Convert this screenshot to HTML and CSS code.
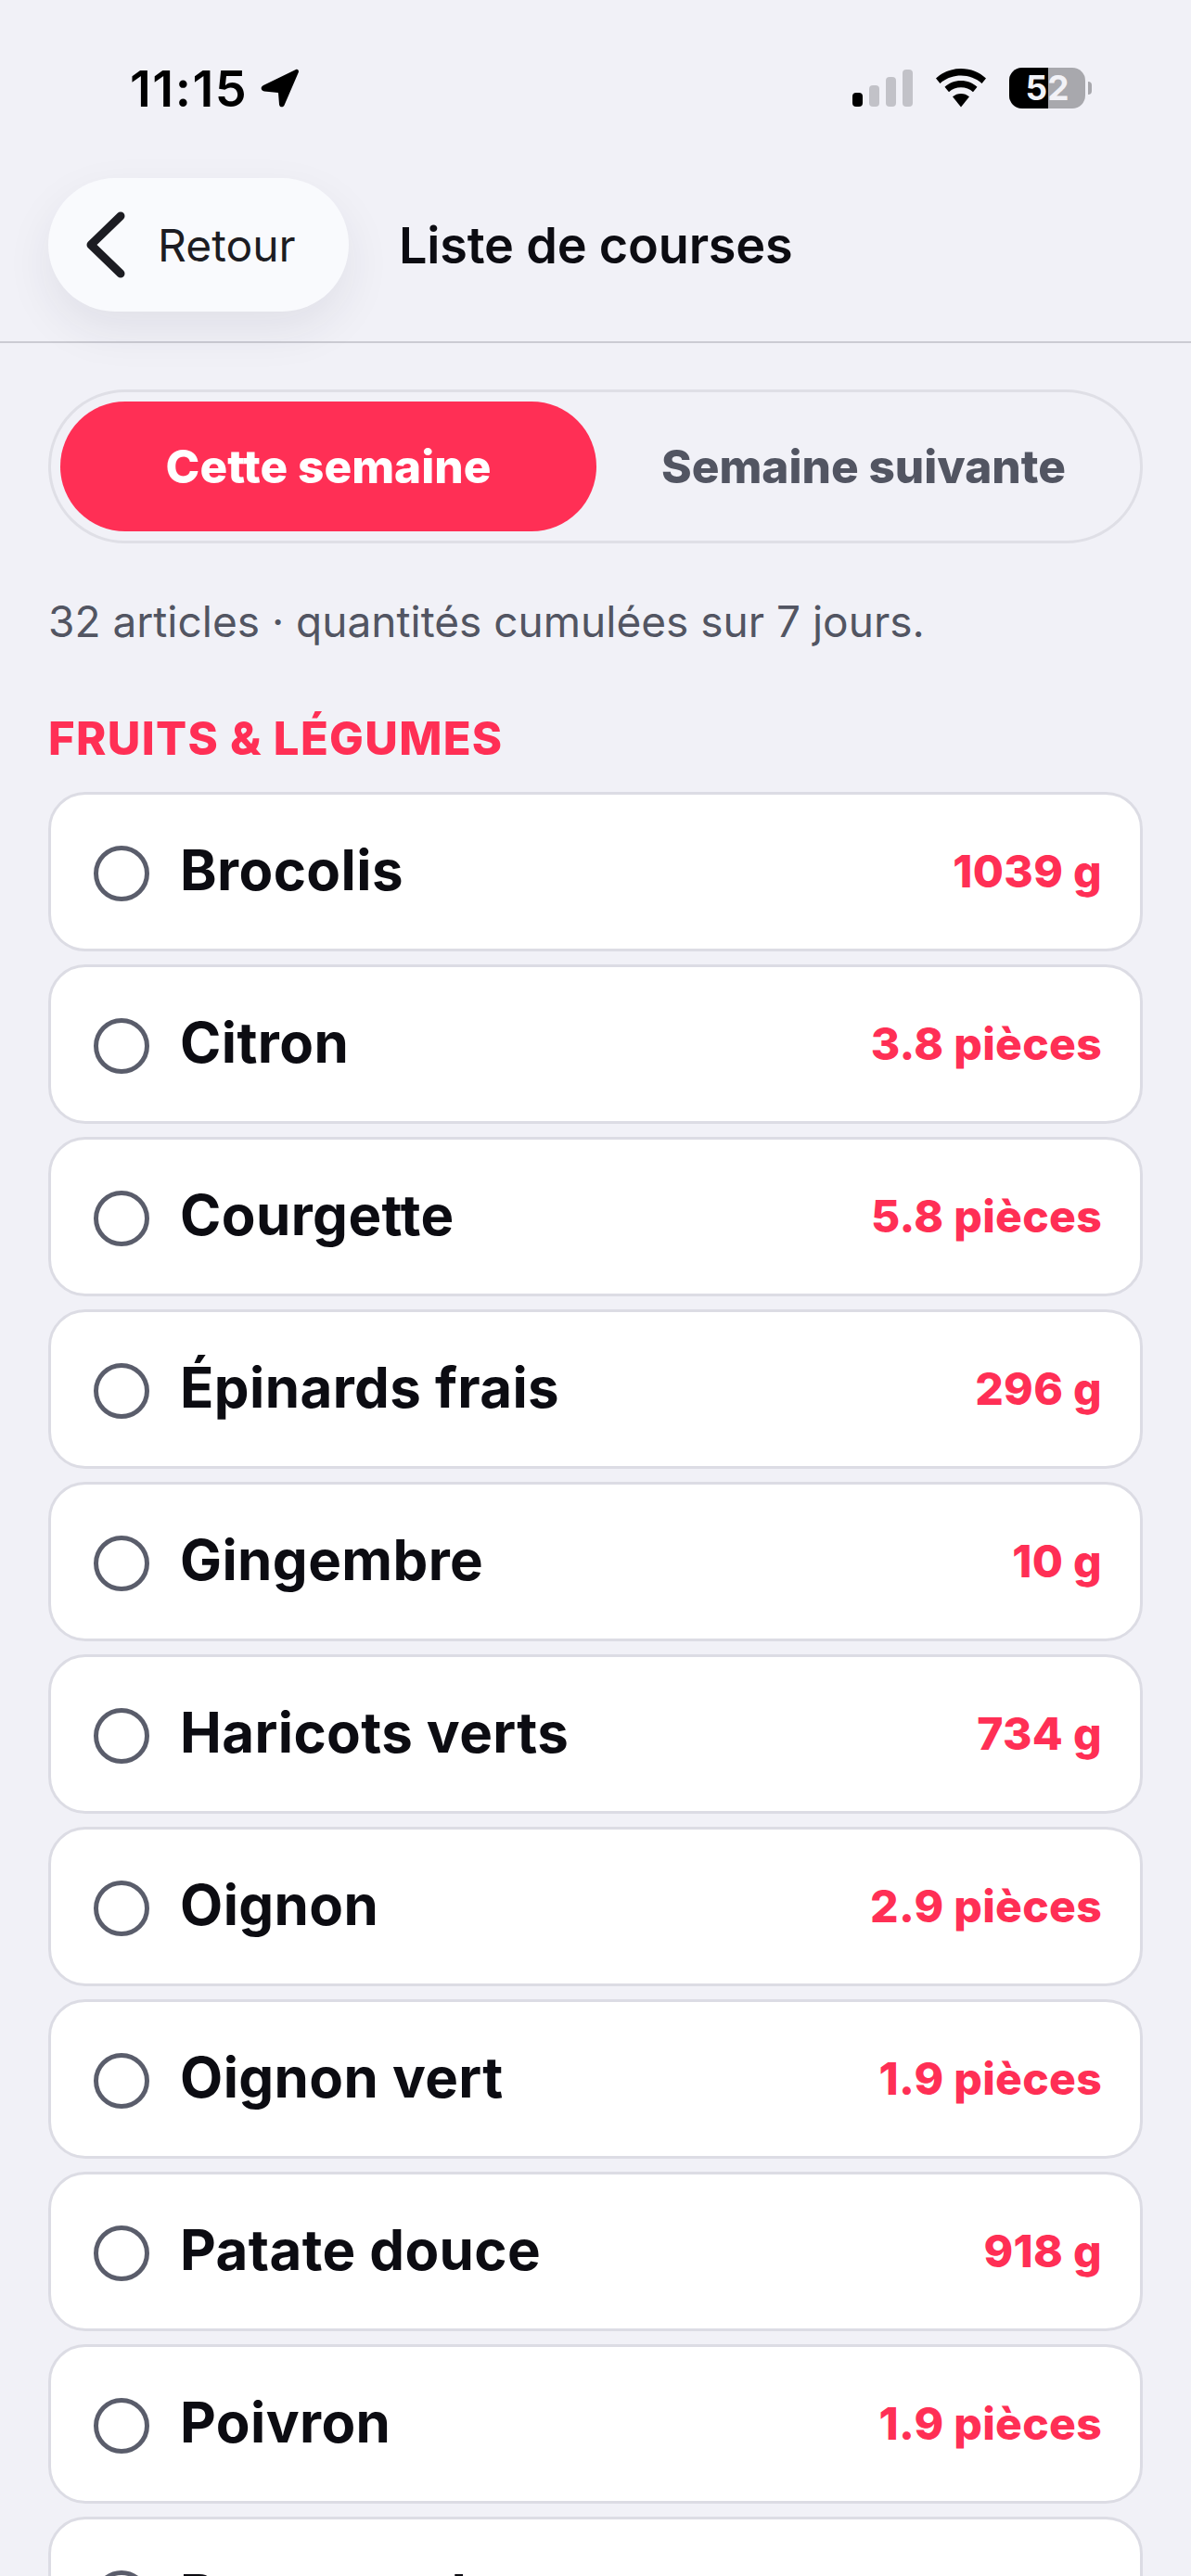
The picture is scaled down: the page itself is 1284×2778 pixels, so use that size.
FILE: index.html
```html
<!DOCTYPE html>
<html lang="fr">
<head>
  <meta charset="UTF-8">
  <title>Liste de courses</title>
  <link rel="stylesheet" href="styles.css">
</head>
<body>
  <div class="status-bar">
    <div class="status-left">
      <span class="time">11:15</span>
      <svg class="loc-icon" width="42" height="42" viewBox="0 0 42 42"><path d="M38 1 3 18c-3.500 1.700-3 6 1 6.400L19 26l1 12.500c.3 3.500 4.500 3.800 5.600.8L40.800 4c.7-2.200-1-4-2.800-3z" fill="#000"/></svg>
    </div>
    <div class="status-right">
      <div class="signal">
        <span class="bar bar-1"></span>
        <span class="bar bar-2"></span>
        <span class="bar bar-3"></span>
        <span class="bar bar-4"></span>
      </div>
      <svg class="wifi-icon" width="56" height="42" viewBox="0 0 56 42"><path d="M28 0c10.500 0 20 4 27 10.500l-4.500 5.500C44.500 10.500 36.500 7.500 28 7.500S11.500 10.500 5.500 16L1 10.500C8 4 17.500 0 28 0z" fill="#000"/><path d="M28 13c6.800 0 13 2.500 17.500 6.800l-4.500 5.400C37.500 22 33 20.300 28 20.300S18.500 22 15 25.200l-4.500-5.400C15 15.500 21.200 13 28 13z" fill="#000"/><path d="M28 27c3.400 0 6.500 1.200 9 3.300L28 41.500l-9-11.200c2.500-2.100 5.600-3.300 9-3.300z" fill="#000"/></svg>
      <div class="battery">
        <div class="battery-body">
          <span class="battery-fill"></span>
          <span class="battery-num">52</span>
        </div>
        <span class="battery-cap"></span>
      </div>
    </div>
  </div>

  <header class="top-bar">
    <a class="back-btn" href="#">
      <svg width="44" height="72" viewBox="0 0 44 72"><path d="M38 5 6 36l32 31" fill="none" stroke="#1c1c22" stroke-width="9" stroke-linecap="round" stroke-linejoin="round"/></svg>
      <span>Retour</span>
    </a>
    <h1 class="page-title">Liste de courses</h1>
  </header>

  <main class="content">
    <div class="week-tabs">
      <div class="tab tab-active">Cette semaine</div>
      <div class="tab">Semaine suivante</div>
    </div>

    <p class="summary">32 articles · quantités cumulées sur 7 jours.</p>

    <h2 class="section-title">FRUITS &amp; LÉGUMES</h2>

    <ul class="item-list">
      <li class="item"><span class="check"></span><span class="name">Brocolis</span><span class="qty">1039 g</span></li>
      <li class="item"><span class="check"></span><span class="name">Citron</span><span class="qty">3.8 pièces</span></li>
      <li class="item"><span class="check"></span><span class="name">Courgette</span><span class="qty">5.8 pièces</span></li>
      <li class="item"><span class="check"></span><span class="name">Épinards frais</span><span class="qty">296 g</span></li>
      <li class="item"><span class="check"></span><span class="name">Gingembre</span><span class="qty">10 g</span></li>
      <li class="item"><span class="check"></span><span class="name">Haricots verts</span><span class="qty">734 g</span></li>
      <li class="item"><span class="check"></span><span class="name">Oignon</span><span class="qty">2.9 pièces</span></li>
      <li class="item"><span class="check"></span><span class="name">Oignon vert</span><span class="qty">1.9 pièces</span></li>
      <li class="item"><span class="check"></span><span class="name">Patate douce</span><span class="qty">918 g</span></li>
      <li class="item"><span class="check"></span><span class="name">Poivron</span><span class="qty">1.9 pièces</span></li>
      <li class="item"><span class="check"></span><span class="name">Pommes de terre</span></li>
    </ul>
  </main>
</body>
</html>
```

FILE: styles.css
```css
* {
  box-sizing: border-box;
}

html, body {
  height: 2778px;
  overflow: hidden;
}

body {
  margin: 0;
  background-color: #f1f1f7;
  font-family: Inter, "Liberation Sans", sans-serif;
  color: #0c0c12;
}

/* status bar */
.status-bar {
  height: 192px;
  padding: 70px 107px 0 140px;
  display: flex;
  justify-content: space-between;
  align-items: flex-start;
}

.status-left {
  display: flex;
  align-items: center;
  gap: 14px;
  height: 50px;
}

.time {
  font-size: 54px;
  font-weight: 600;
  color: #000;
  letter-spacing: 1.5px;
}

.status-right {
  display: flex;
  align-items: center;
  gap: 24px;
  height: 50px;
}

.signal {
  display: flex;
  align-items: flex-end;
  gap: 7px;
  height: 40px;
}

.bar {
  width: 11px;
  border-radius: 4px;
  background-color: #c2c2c8;
}

.bar-1 { height: 15px; background-color: #000; }
.bar-2 { height: 23px; }
.bar-3 { height: 32px; }
.bar-4 { height: 40px; }

.battery {
  display: flex;
  align-items: center;
  gap: 3px;
}

.battery-body {
  position: relative;
  width: 82px;
  height: 44px;
  border-radius: 14px;
  background-color: #a8a8ad;
  overflow: hidden;
  text-align: center;
}

.battery-fill {
  position: absolute;
  left: 0;
  top: 0;
  bottom: 0;
  width: 42px;
  background-color: #000;
}

.battery-num {
  position: relative;
  font-size: 37px;
  font-weight: 700;
  line-height: 44px;
  color: #f2f2f7;
}

.battery-cap {
  width: 4px;
  height: 14px;
  border-radius: 0 4px 4px 0;
  background-color: #a8a8ad;
}

/* header */
.top-bar {
  height: 178px;
  padding: 0 52px;
  display: flex;
  align-items: flex-start;
  gap: 54px;
  border-bottom: 2px solid #cbcbd3;
}

.back-btn {
  width: 324px;
  height: 144px;
  padding-left: 40px;
  display: flex;
  align-items: center;
  gap: 34px;
  flex: none;
  border-radius: 72px;
  background-color: #f9fafd;
  box-shadow: 0 20px 50px rgba(40, 40, 70, 0.08);
  color: #1c1c22;
  font-size: 48px;
  text-decoration: none;
}

.page-title {
  margin: 0;
  height: 144px;
  line-height: 146px;
  font-size: 54px;
  font-weight: 600;
  letter-spacing: -0.2px;
}

/* week switch */
.content {
  padding: 50px 52px 0;
}

.week-tabs {
  height: 166px;
  padding: 10px;
  display: flex;
  border: 3px solid #dfdfe6;
  border-radius: 83px;
}

.tab {
  flex: 1;
  display: flex;
  align-items: center;
  justify-content: center;
  border-radius: 70px;
  font-size: 49.5px;
  font-weight: 800;
  color: #525562;
}

.tab-active {
  flex: none;
  width: 578px;
  background-color: #ff2f55;
  color: #fff;
}

.summary {
  margin: 56px 0 0;
  font-size: 46px;
  line-height: 56px;
  color: #525562;
}

.section-title {
  margin: 69px 0 0;
  font-size: 49px;
  line-height: 60px;
  font-weight: 800;
  letter-spacing: 1.3px;
  color: #ff2f55;
}

/* items */
.item-list {
  list-style: none;
  margin: 27px 0 0;
  padding: 0;
  display: flex;
  flex-direction: column;
  gap: 14px;
}

.item {
  height: 172px;
  flex: none;
  padding: 0 41px 0 46px;
  display: flex;
  align-items: center;
  background-color: #fff;
  border: 3px solid #dcdce4;
  border-radius: 40px;
}

.check {
  width: 60px;
  height: 60px;
  margin-top: 3px;
  margin-right: 33px;
  flex: none;
  border: 5px solid #5a5d6b;
  border-radius: 50%;
}

.name {
  flex: 1;
  padding-bottom: 5px;
  font-size: 60px;
  font-weight: 700;
  letter-spacing: 0.4px;
}

.qty {
  padding-bottom: 2px;
  font-size: 48px;
  font-weight: 800;
  letter-spacing: 0.3px;
  color: #ff2f55;
}
```
